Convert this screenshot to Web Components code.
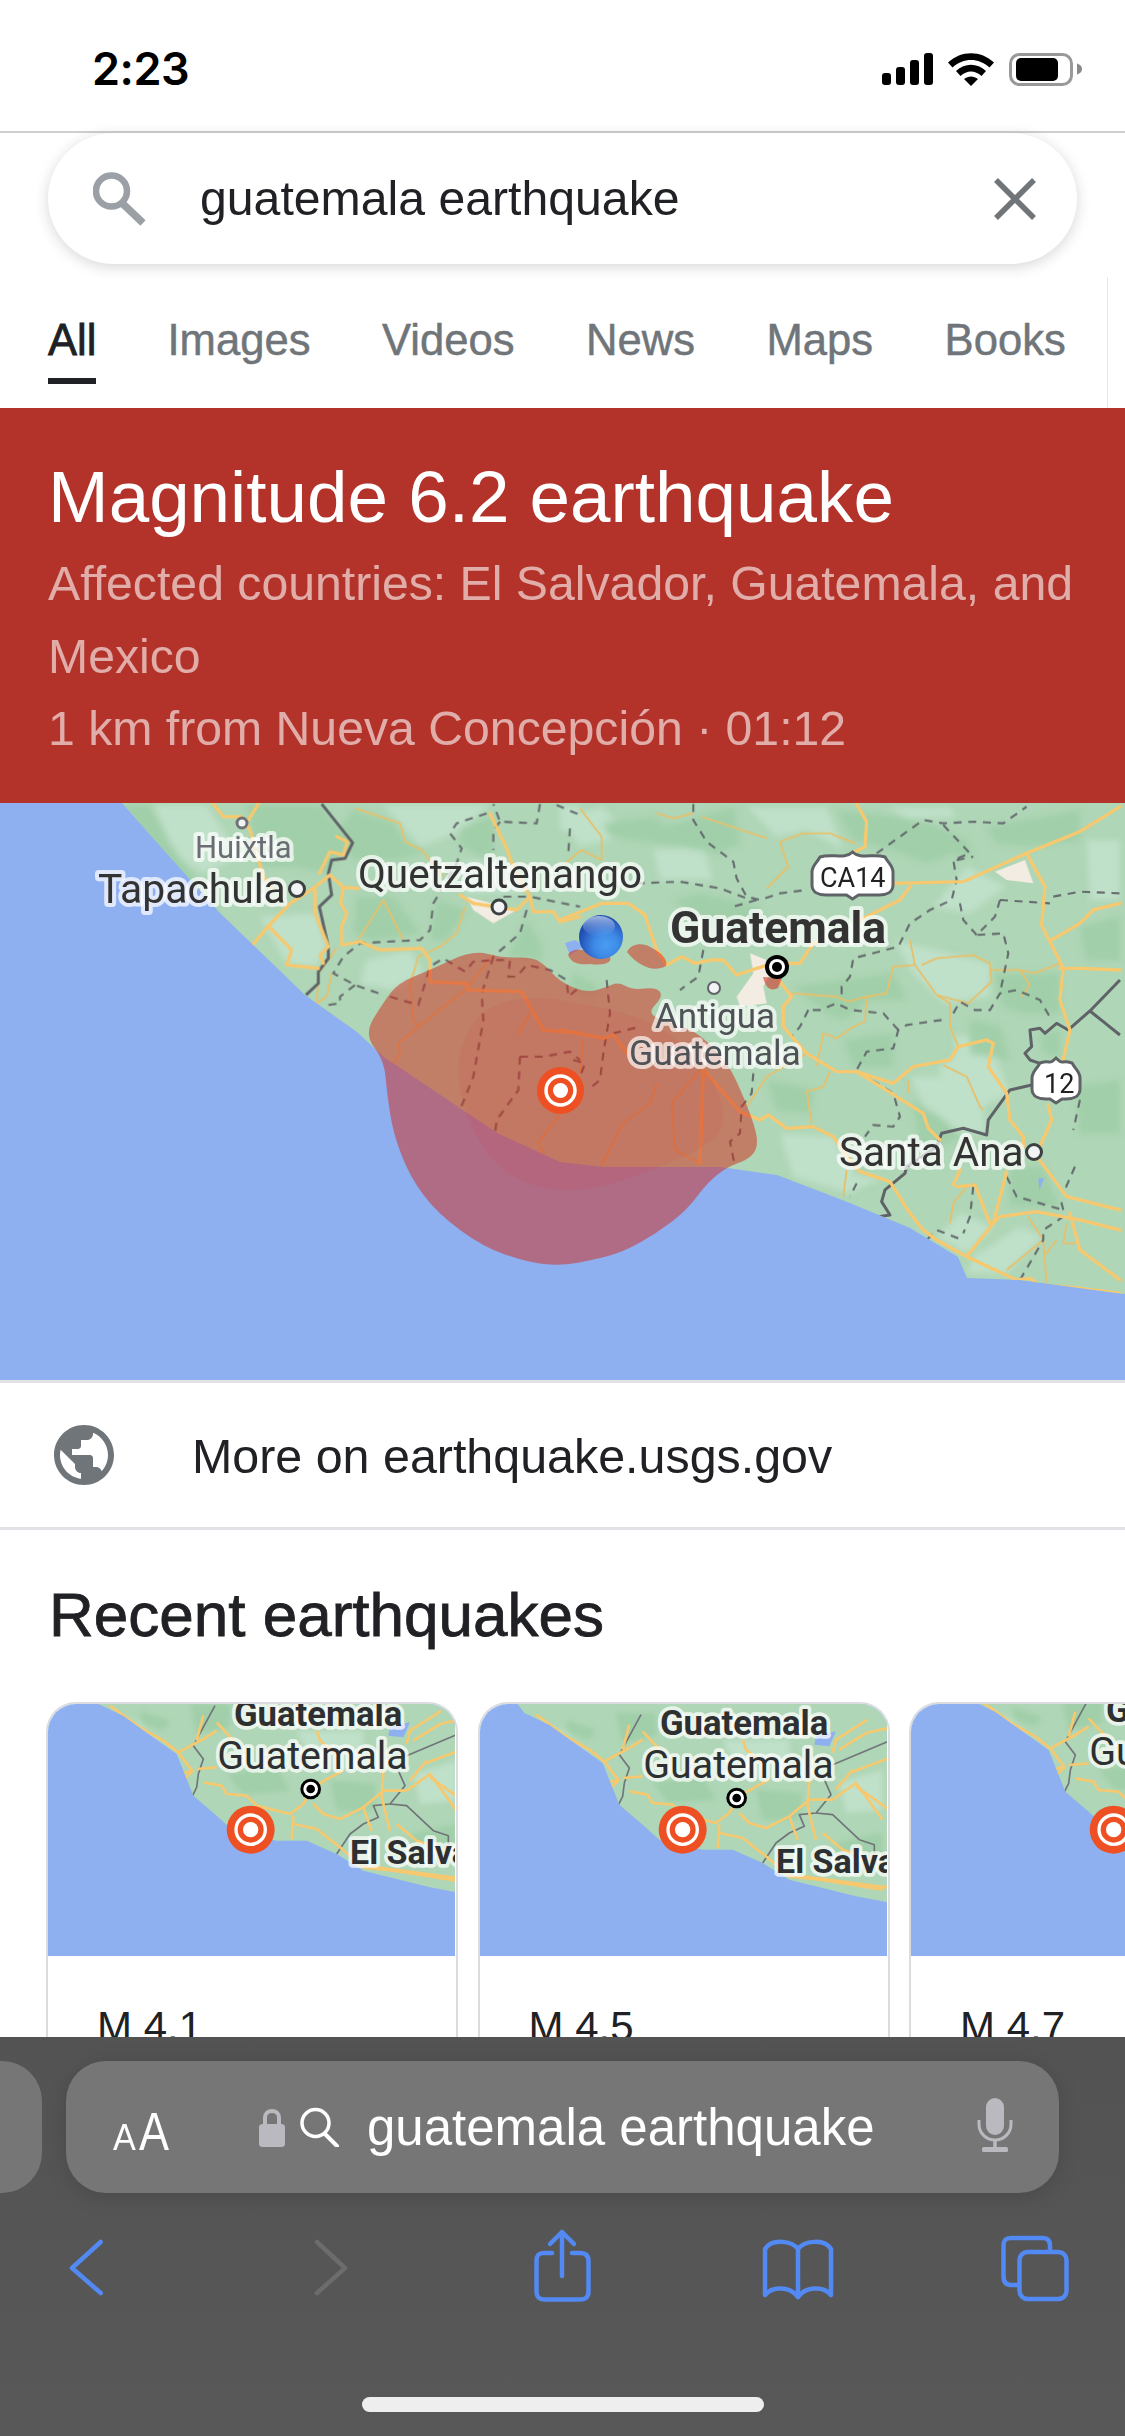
<!DOCTYPE html>
<html lang="en"><head><meta charset="utf-8"><title>guatemala earthquake</title>
<style>
html,body{margin:0;padding:0;background:#fff}
body{width:1125px;height:2436px;overflow:hidden;font-family:"Liberation Sans",Arial,sans-serif;display:flex;flex-direction:column}
main-column{flex:none}
</style></head><body>
<main-column>
  <status-bar></status-bar>
  <search-pill query="guatemala earthquake"></search-pill>
  <tab-strip></tab-strip>
  <quake-alert></quake-alert>
  <quake-map></quake-map>
  <more-link>More on earthquake.usgs.gov</more-link>
  <recent-quakes>
    <quake-card mag="M 4.1" dx="0" dy="0"></quake-card>
    <quake-card mag="M 4.5" dx="-18" dy="27"></quake-card>
    <quake-card mag="M 4.7" dx="27" dy="-12"></quake-card>
  </recent-quakes>
</main-column>
<safari-toolbar query="guatemala earthquake"></safari-toolbar>
<script>
const sans='"Liberation Sans",Arial,sans-serif';
function define(name,css,html,extra){
  customElements.define(name,class extends HTMLElement{
    connectedCallback(){
      if(this.shadowRoot)return;
      const r=this.attachShadow({mode:'open'});
      r.innerHTML='<style>'+css+'</style>'+(typeof html==='function'?html(this):html);
    }
  });
}
define('main-column',':host{display:block;width:1125px;height:2037px;overflow:hidden;position:relative}','<slot></slot>');

define('status-bar',`
:host{display:flex;box-sizing:border-box;width:1125px;height:133px;border-bottom:2px solid #cfcfcf;background:#fff;justify-content:space-between;align-items:flex-start}
.t{font:600 45px/1 Inter,"Liberation Sans",sans-serif;color:#000;margin:46px 0 0 92px;letter-spacing:-.5px}
svg{display:block;margin:53px 40px 0 0}
`,`<div class="t">2:23</div>
<svg width="203" height="33" viewBox="882 53 203 33">
<g fill="#000"><rect x="882" y="73" width="9" height="12" rx="3"/><rect x="896" y="67" width="9" height="18" rx="3"/><rect x="910" y="60" width="9" height="25" rx="3"/><rect x="924" y="53" width="9" height="32" rx="3"/>
<path d="M948 62.5C961 50 981 50 994 62.5L989.5 67.5C979 57.500 963 57.500 952.500 67.500Z"/>
<path d="M956 71C965 62.5 977 62.500 986 71L981.500 76C975 70 967 70 960.500 76Z"/>
<path d="M964 79C968.500 75.500 973.500 75.500 978 79L971 86Z"/></g>
<rect x="1010.500" y="54.500" width="61" height="30" rx="9" fill="none" stroke="#999" stroke-width="3"/>
<rect x="1016" y="58" width="42" height="23" rx="5" fill="#000"/>
<path d="M1077 63.500C1081 65 1082 67 1082 69C1082 71 1081 73 1077 74.500Z" fill="#8a8a8a"/></svg>`);

define('search-pill',`
:host{display:block;height:131px;background:#fff;position:relative;z-index:2}
.p{margin:0 48px;height:131px;border-radius:66px;background:#fff;box-shadow:0 3px 14px rgba(32,33,36,.18);display:flex;align-items:center;padding-left:45px;box-sizing:border-box;font:48.200px/1 ${sans};color:#202124}
.s{margin-right:47px;display:block}
.q{flex:1;position:relative}
.x{margin-right:40px;display:block}
`,h=>`<div class="p"><svg class="s" width="60" height="56" viewBox="93 170 60 56"><circle cx="111.500" cy="190" r="15.500" fill="none" stroke="#9aa0a6" stroke-width="6.500"/><path d="M122 202L143 222" stroke="#9aa0a6" stroke-width="7.500"/></svg><span class="q">${h.getAttribute('query')}</span><svg class="x" width="44" height="44" viewBox="0 0 44 44"><path d="M3 3L41 41M41 3L3 41" stroke="#70757a" stroke-width="5.500" fill="none"/></svg></div>`);

define('tab-strip',`
:host{display:flex;box-sizing:border-box;height:144px;background:#fff;padding:51px 0 0 48px;gap:71.500px;position:relative;font:43.600px/50px ${sans};color:#70757a;-webkit-text-stroke:.5px #70757a}
div{height:67px;flex:none}
.a{color:#202124;-webkit-text-stroke:.8px #202124;border-bottom:6px solid #202124;height:63px;width:48px}
.e{position:absolute;left:1107px;top:13px;bottom:0;width:1px;background:#e6e6e6;padding:0;height:auto}
`,`<div class="a">All</div><div>Images</div><div>Videos</div><div>News</div><div>Maps</div><div>Books</div><i class="e"></i>`);

define('quake-alert',`
:host{display:block;box-sizing:border-box;height:395px;background:#b3322a;padding:46px 30px 0 48px}
h2{margin:0 0 7px;font:400 72.800px/86px ${sans};color:#fff}
p{margin:0;font:400 48.200px/73px ${sans};color:rgba(255,255,255,.6)}
p+p{margin-top:-1px}
`,`<h2>Magnitude 6.2 earthquake</h2><p>Affected countries: El Salvador, Guatemala, and Mexico</p><p>1 km from Nueva Concepción · 01:12</p>`);

const pl=(a,attr)=>a.map(d=>`<polyline points="${d}" ${attr||''}/>`).join('');
const pg=(a,fill)=>a.map(d=>`<polygon points="${d}" fill="${fill}"/>`).join('');
/* closed smooth outline through the midpoints of a point list */
const smooth=s=>{const p=s.trim().split(/\s+/).map(q=>q.split(',').map(Number)),n=p.length;
 const mid=(a,b)=>[(a[0]+b[0])/2,(a[1]+b[1])/2];let m=mid(p[n-1],p[0]),d=`M${m[0]} ${m[1]}`;
 for(let i=0;i<n;i++){const e=mid(p[i],p[(i+1)%n]);d+=`Q${p[i][0]} ${p[i][1]} ${e[0]} ${e[1]}`;}return d+'Z';};
const M={
 lightA:["280,15 440,15 540,170 430,220 350,170","600,350 770,340 800,440 770,500 680,490","920,480 1050,450 1090,520 1000,570 900,550","970,15 1290,15 1190,100 1080,140 1020,70","1210,180 1340,190 1400,280 1210,280","1500,15 1560,15 1560,100 1500,90"],
 darkA:["560,15 780,15 870,130 800,220 700,200 600,200","880,30 1000,70 1040,130 1100,150 1010,180 880,180 830,100","890,290 1000,290 1080,400 940,420 880,400","1200,85 1300,50 1300,170 1260,170 1200,130","1400,360 1440,420 1450,480 1340,470 1370,420","1130,300 1220,330 1160,420 1110,420","190,15 270,15 330,130 470,320 430,330 260,130"],
 roadA:["460,12 490,50 545,50 570,90 610,230 640,270","595,12 565,60","580,432 625,378 690,310 760,265 810,225 850,262 895,265","625,378 695,450 680,495 775,505","830,110 862,125 850,165 810,155 778,220","765,270 765,340 805,440 780,465 790,490","850,262 842,310 860,340 845,380 845,435 900,425 960,450 1085,445 1110,480 1110,545 1220,550 1225,570 1385,575 1450,690 1560,700","1200,285 1240,310 1370,330 1410,290 1420,335 1480,335 1500,365 1560,350","1290,40 1340,145 1360,200 1410,290"],
 thinA:["885,25 1020,70 1035,125 1085,150 1150,230","970,300 895,420","970,300 1030,420","1215,320 1190,400 1140,440 1075,470 1050,555 1060,660 1075,680 1015,730 1020,760 1000,790","1075,680 1215,570 1300,465","815,520 800,590 770,610","830,445 775,520 770,610","1410,640 1370,705","1500,945 1435,1025 1450,1060"],
 dashA:["1440,12 1430,70 1320,65 1300,12","1280,40 1190,70 1170,100 1205,145 1190,190 1120,310 1110,390 1080,420 980,425 900,430 850,470 820,520 885,555 970,585","885,555 840,590 840,610 805,615","1320,65 1300,90 1300,150","1530,85 1525,160","1490,15 1560,45","990,590 1075,615 1110,500 1150,475 1215,515 1240,485 1300,480 1350,480 1345,530 1370,530 1400,495 1470,510 1520,540 1525,590 1560,560","1300,470 1265,580 1270,660 1240,830 1200,930","1380,770 1450,770 1530,755 1560,780","1380,770 1375,870 1310,960 1305,1000","1400,330 1380,400 1300,470","1330,290 1410,290 1560,320"],
 border:"785,12 878,128 855,175 815,180 805,220 815,285 778,320 805,440 805,475 775,515 775,550 738,585",
 lightB:["0,50 130,20 200,110 60,140","280,150 430,140 460,240 300,240","1000,420 1290,490 1290,590 1150,610 1060,520","1050,830 1250,830 1280,1000 1130,1000","660,1000 820,1010 890,1130 970,1130 870,1180 700,1130","560,20 800,20 850,150 740,90 650,110","980,20 1170,20 1190,50 1050,60","1180,700 1290,730 1350,880 1250,930 1130,810 1190,760","1200,1240 1300,1280 1220,1360 1130,1310","1380,1280 1450,1310 1340,1420 1220,1420 1240,1370","1580,120 1680,120 1680,300 1590,300","1220,200 1340,260 1230,340 1120,320"],
 darkB:["130,70 280,50 320,80 520,20 540,130 470,160 300,130 150,110","830,30 1080,60 1220,120 1240,170 1180,160 1100,190 1000,150 880,120","1280,80 1400,60 1560,30 1560,120 1400,140 1310,130","420,280 600,320 600,420 480,400 340,300","700,560 1000,520 1040,600 930,600 850,660 800,640","620,840 760,870 750,940 650,930","850,720 1000,700 1000,800 880,800","1060,900 1140,950 1210,1010 1080,1060","1300,520 1500,520 1500,640 1400,640 1330,620","1230,660 1320,680 1350,780 1230,760","1350,1100 1450,1100 1500,1220 1350,1220","1440,700 1500,690 1500,770 1450,760","1560,380 1680,350 1680,480 1580,480","1550,860 1680,840 1680,1000 1560,1000","40,520 120,560 90,590 30,560"],
 roadB:["890,12 920,65 915,140 885,155","1680,20 1560,95 1400,160 1210,245 1000,250","1050,260 1020,300 900,360","0,360 125,310 205,310 255,345 290,450 320,495 365,470 405,490 455,480 490,480 530,525 590,505 640,490 720,490 760,430 790,420","660,545 695,590 670,620 670,680 700,715 740,760 830,815 890,815 1000,850 1060,800 1170,780 1195,740 1280,720 1300,730 1285,800 1340,880 1350,960 1390,1010 1390,1040","890,815 1010,890 1090,940 1105,985 1140,1020","540,935 600,960 625,945 680,985 760,980 820,1010 870,1080 900,1115 990,1145 1050,1240 1090,1290 1130,1320 1220,1370 1300,1270 1320,1250 1430,1235 1560,1260 1680,1290","1220,1370 1370,1440 1410,1435 1440,1455 1560,1465 1680,1480","1400,160 1455,260 1445,375 1510,505 1500,600 1530,690 1510,780","1475,420 1560,370 1600,330 1680,310","1500,505 1560,505 1680,510","1420,1055 1520,1190 1560,1200 1680,1230","1465,915 1475,960 1440,1040","1340,1115 1300,1270","1180,1155 1200,1110","1190,1160 1245,1155 1290,1270","0,690 130,715 160,705 210,770","430,810 420,1090","430,810 540,935","1530,1240 1560,1350 1680,1440"],
 thinB:["660,125 730,100 810,100 885,130","660,125 685,200 620,265","290,40 340,55 400,40","425,50 620,115","60,25 125,110 125,180 65,150 15,190","1000,500 980,580 920,590 915,665 880,680 830,715 790,700","695,580 830,590 865,605 920,590","1000,500 1065,495 1130,585 1225,610 1295,545 1290,490 1240,465 1130,475 1085,495","1050,420 1065,495","1290,510 1380,510 1410,555 1385,590","1380,510 1425,520 1500,490","1130,585 1170,610 1170,680 1195,740","790,700 770,800","810,815 790,860 740,875 755,970","560,920 620,830 740,760","1150,795 1220,830 1260,920 1270,930","1045,840 1045,880","860,1110 850,1190","1180,1210 1220,1160","1180,1210 1170,1270","1405,1250 1450,1320 1340,1410","1450,1320 1460,1450","1520,1270 1510,1330 1560,1330","1490,1320 1455,1365","60,820 70,720","290,850 270,910 190,970 125,1095","335,910 420,810","335,910 345,1050 420,1090"],
 dashB:["400,12 400,60 440,125 520,185 530,235 560,290 600,300 660,280 740,270","590,300 520,320","230,250 360,245 480,265 560,295","950,160 1090,60 1150,70 1240,65 1330,70 1400,20","1150,75 1230,160 1180,180 1190,240 1175,300 1110,330 1050,370 1015,440 880,475 870,530 845,560 845,600","1320,300 1305,350 1250,405 1330,400 1345,460 1320,580","1190,180 1240,170","1200,310 1210,360 1250,405","1480,290 1560,275 1680,280","1320,300 1470,310","1145,660 1040,675 1015,690 1000,745 920,755 890,810","1015,690 970,640 870,630 830,610 780,630 745,630","745,630 720,680 695,710","1180,640 1200,605 1245,630 1290,630 1320,580 1370,570 1440,600 1475,660","900,820 1000,880 1020,950 1000,980 940,975 915,1010","430,450 415,530 360,570","580,820 575,880 545,920 540,1000 510,1025 525,1100","890,1150 870,1190","1100,1320 1130,1290 1195,1315","1240,1160 1230,1250 1210,1300","1340,1130 1370,1190 1510,1230","1510,1230 1500,1190","1380,1440 1450,1320 1450,1290 1510,1250","1545,1100 1510,1180","1560,900 1540,990","140,540 150,640 130,760 120,840 90,865","40,780 75,790 60,830","160,700 240,680"],
 borderB:["1680,540 1590,633 1525,690 1490,670 1455,700 1440,685 1410,690 1415,740 1395,760 1410,780 1440,790","1590,633 1680,705","1415,855 1350,870 1285,960 1280,1005 1210,985 1145,1000 1130,1040 1040,1100 1035,1120 975,1170 965,1205 990,1245 955,1250"]
};
const land="122,803 220,913 305,995 357,1032 385,1058 393,1063 497,1133 560,1162 603,1167 720,1167 777,1175 850,1203 910,1228 958,1257 967,1278 1020,1280 1080,1288 1125,1294 1125,803";
const redA="364,1034 383,1003 398,983 430,970 473,950 503,958 530,957 543,963 560,982 587,993 607,987 618,982 633,990 657,987 663,997 648,1012 660,1020 680,1025 700,1035 715,1050 730,1067 745,1100 757,1133 757,1150 747,1160 727,1167 707,1183 687,1210 657,1233 623,1252 593,1260 560,1266 527,1262 483,1247 437,1213 410,1177 393,1133 387,1093 384,1060";
const redIn="478,1010 530,995 590,1005 650,1020 690,1050 720,1090 725,1130 700,1150 640,1175 600,1187 560,1192 520,1182 490,1160 465,1115 455,1060";
customElements.define('quake-map',class extends HTMLElement{connectedCallback(){
 if(this.shadowRoot)return;const r=this.attachShadow({mode:'open'});
 const lab=(x,y,s,t,c,w,o)=>`<text x="${x}" y="${y}" font-size="${s}" fill="${c||'#333'}" font-weight="${w||400}" stroke="${o||'rgba(255,255,255,.72)'}" stroke-width="8" paint-order="stroke" stroke-linejoin="round">${t}</text>`;
 const dot=(x,y,r2,c,sw)=>`<circle cx="${x}" cy="${y}" r="${r2}" fill="#f1f3f4" stroke="${c||'#3c4043'}" stroke-width="${sw||3}"/>`;
 const shield=(x,y,w,h)=>{const m=x+w/2,b=y+h;return `<path d="M${x+8} ${y+5}C${x+20} ${y+1} ${m-8} ${y+8} ${m} ${y}C${m+8} ${y+8} ${x+w-20} ${y+1} ${x+w-8} ${y+5}C${x+w-4} ${y+12} ${x+w} ${y+14} ${x+w} ${y+20}L${x+w} ${b-16}C${x+w} ${b-8} ${x+w-8} ${b-6} ${x+w-14} ${b-6}L${m+6} ${b-6}L${m} ${b-2}L${m-6} ${b-6}L${x+14} ${b-6}C${x+8} ${b-6} ${x} ${b-8} ${x} ${b-16}L${x} ${y+20}C${x} ${y+14} ${x+4} ${y+12} ${x+8} ${y+5}Z" fill="#fff" stroke="#5f6368" stroke-width="3"/>`};
 r.innerHTML=`<style>:host{display:block;width:1125px;height:577px;background:#8fb0f0}svg{display:block;font-family:Roboto,"Liberation Sans",sans-serif}
 .road{fill:none;stroke:#f6c86f;stroke-width:10;stroke-linejoin:round;stroke-linecap:round}
 .thin{fill:none;stroke:#e7c06c;stroke-width:5.500;stroke-linejoin:round}
 .dash{fill:none;stroke:#5f6368;stroke-width:6.500;stroke-dasharray:24 20;opacity:.9}
 .bord{fill:none;stroke:#5f6368;stroke-width:9;stroke-linejoin:round}</style>
 <svg width="1125" height="577" viewBox="0 803 1125 577"><defs>
 <clipPath id="l"><polygon points="${land}"/></clipPath>
 <filter id="soft" x="-5%" y="-5%" width="110%" height="110%"><feGaussianBlur stdDeviation="3"/></filter>
 <radialGradient id="b" cx=".62" cy=".68" r=".62"><stop offset="0" stop-color="#4a9cf2"/><stop offset=".45" stop-color="#3d8ae6"/><stop offset=".8" stop-color="#2d63c8"/><stop offset="1" stop-color="#1f4fb0"/></radialGradient>
 <linearGradient id="h" x1="0" y1="0" x2="0" y2="1"><stop offset="0" stop-color="#b9c8ea" stop-opacity=".85"/><stop offset="1" stop-color="#6f9be0" stop-opacity=".1"/></linearGradient>
 </defs>
 <rect x="0" y="803" width="1125" height="577" fill="#8fb0f0"/>
 <polygon points="${land}" fill="#afd6b6"/>
 <g clip-path="url(#l)">
  <g filter="url(#soft)">
  <g transform="translate(60 800) scale(.3333)">${pg(M.lightA,'#bfe0c9')}${pg(M.darkA,'#a0cfa9')}</g>
  <g transform="translate(560 800) scale(.3333)">${pg(M.lightB,'#bfe0c9')}${pg(M.darkB,'#a0cfa9')}</g>
  </g>
  <g transform="translate(560 800) scale(.3333)"><polygon points="570,460 620,480 640,500 610,560 620,610 540,620 530,590 580,520" fill="#f3ece2"/><polygon points="1305,215 1395,180 1420,250 1340,240" fill="#f3ece2"/></g>
  <g transform="translate(60 800) scale(.3333)"><polygon points="1220,290 1370,330 1300,370 1240,330" fill="#f3ece2"/>${pl(M.thinA,'class="thin"')}${pl(M.dashA,'class="dash"')}${pl([M.border],'class="bord"')}${pl(M.roadA,'class="road"')}</g>
  <g transform="translate(560 800) scale(.3333)">${pl(M.thinB,'class="thin"')}${pl(M.dashB,'class="dash"')}${pl(M.borderB,'class="bord"')}${pl(M.roadB,'class="road"')}
   <polygon points="1435,1135 1452,1135 1438,1172" fill="#8fb0f0"/></g>
 </g>
 <path d="${smooth(redA)}" fill="rgb(211,40,26)" opacity=".5"/>
 <path d="${smooth(redIn)}" fill="rgb(211,40,26)" opacity=".07"/>
 <polygon points="565,943 575,940 585,946 570,955" fill="#8fb0f0"/>
 <path d="M568 955C572 946 588 950 610 957C612 962 606 966 590 964C580 965 572 964 568 955Z" fill="rgb(211,40,26)" opacity=".5"/>
 <path d="M627 952C632 942 645 943 652 948C662 953 668 960 666 966C655 972 640 968 627 952Z" fill="rgb(211,40,26)" opacity=".5"/>
 <path d="M763 977L782 978L778 988C772 991 766 990 763 977Z" fill="rgb(211,40,26)" opacity=".55"/>
 ${lab(195,858,31,'Huixtla','#6a6e74')}
 ${lab(98,903,40.800,'Tapachula')}
 ${lab(358,888,40.500,'Quetzaltenango')}
 ${lab(670,943,44.500,'Guatemala','#333',700)}
 ${lab(655,1028,35,'Antigua','#4f5357',400,'rgba(255,255,255,.68)')}
 ${lab(629,1065,35.500,'Guatemala','#4f5357',400,'rgba(255,255,255,.68)')}
 ${lab(839,1166,40.500,'Santa Ana')}
 ${dot(242,823,5,'#6f7378',3)}${dot(297,889,7.500)}${dot(499,907,7)}${dot(714,988,6,'#5f6368',2)}${dot(1034,1152,7.500)}
 <circle cx="777" cy="967" r="12" fill="#000"/><circle cx="777" cy="967" r="8" fill="#fff"/><circle cx="777" cy="967" r="5" fill="#000"/>
 ${shield(812,852,81,49)}<text x="820" y="887" font-size="27" fill="#222">CA14</text>
 ${shield(1032,1058,48,47)}<text x="1044" y="1093" font-size="27" fill="#222">12</text>
 <circle cx="601" cy="937" r="22" fill="url(#b)"/><ellipse cx="599" cy="926" rx="16" ry="10" fill="url(#h)"/>
 <circle cx="560.500" cy="1090.500" r="23.500" fill="#ee5023"/><circle cx="560.500" cy="1090.500" r="14.500" fill="none" stroke="#fff" stroke-width="3.500"/><circle cx="560.500" cy="1090.500" r="7.500" fill="#fff"/>
 </svg>`;
}});

define('more-link',`
:host{display:flex;box-sizing:border-box;width:1125px;height:150px;align-items:center;padding:0 0 0 48px;border-top:3px solid #e2e2e6;border-bottom:3px solid #e2e2e6;background:#fff;font:48.400px/1 ${sans};color:#202124}
svg{display:block;margin-right:72px;flex:none}
span{position:relative;top:1px}
`,`<svg width="72" height="72" viewBox="0 0 24 24"><path fill="#70757a" d="M12 2C6.480 2 2 6.480 2 12s4.480 10 10 10 10-4.480 10-10S17.520 2 12 2zm-1 17.930c-3.950-.490-7-3.850-7-7.930 0-.620.080-1.210.210-1.790L9 15v1c0 1.100.900 2 2 2v1.930zm6.900-2.540c-.260-.810-1-1.390-1.900-1.390h-1v-3c0-.550-.450-1-1-1H8v-2h2c.550 0 1-.450 1-1V7h2c1.100 0 2-.900 2-2v-.410c2.930 1.190 5 4.060 5 7.410 0 2.080-.800 3.970-2.100 5.390z"/></svg><span><slot></slot></span>`);

define('recent-quakes',`
:host{display:block;background:#fff;padding:0}
h3{margin:0;padding:50px 0 0 49px;font:400 62px/70px ${sans};color:#202124;-webkit-text-stroke:.8px #202124;height:122px}
.r{display:flex;gap:19.500px;padding-left:46px;width:1400px}
`,`<h3>Recent earthquakes</h3><div class="r"><slot></slot></div>`);

const mini={
 land:"100,-100 205,40 280,75 440,190 490,315 560,375 610,420 740,450 830,450 920,490 1000,540 1100,565 1200,590 1280,605 1500,650 1500,-100",
 road:["240,45 330,110 400,150 445,185 490,245","445,185 520,145 560,120","520,75 500,150","560,95 620,160","405,235 430,255 490,240","445,280 490,240","500,235 560,230","520,275 575,285 590,310 650,315 680,345 780,370 820,340 850,290","850,290 900,260 940,240","850,340 880,370 930,385 1000,350 1025,420","790,375 785,445","790,400 860,415 930,470 1000,530 1090,540 1280,570","1000,350 1060,300 1130,300","1060,240 1055,320 1080,420","1130,300 1200,250 1280,360","1190,210 1140,270","1150,150 1230,100 1500,40","1130,160 1140,120 1235,60","860,120 870,150 930,200","1180,220 1500,100","1100,400 1160,450 1500,560","1040,530 1500,590","1200,260 1400,400","20,40 60,100"],
 gray:["555,45 490,165 520,205 505,250 500,290 485,320","1130,195 1500,40","1105,240 1125,285 1080,340 1030,345 1045,380 1000,400 960,430 920,490","1080,340 1130,345 1210,420 1255,435 1255,460"],
 dark:["330,60 420,90 400,120 340,100","480,40 600,40 600,110 500,130","590,250 740,230 780,300 640,310","900,270 1040,280 1030,360 920,360","1140,430 1280,400 1280,520 1180,500"],
 light:["240,60 330,100 400,170 450,280 490,315 400,220","800,120 1000,120 1000,240 850,230","1150,250 1280,210 1280,330 1170,340"]
};
customElements.define('quake-card',class extends HTMLElement{connectedCallback(){
 if(this.shadowRoot)return;const r=this.attachShadow({mode:'open'});
 const dx=this.getAttribute('dx'),dy=this.getAttribute('dy');
 const lab=(x,y,s,t,w)=>`<text x="${x}" y="${y}" font-size="${s}" font-weight="${w}" fill="#2d2f31" stroke="rgba(255,255,255,.72)" stroke-width="22" paint-order="stroke" stroke-linejoin="round">${t}</text>`;
 r.innerHTML=`<style>:host{display:block;flex:none;box-sizing:border-box;width:412px;height:420px;border:2.500px solid #dadce0;border-radius:30px 30px 0 0;overflow:hidden;background:#fff}
 svg{display:block;font-family:Roboto,"Liberation Sans",sans-serif}
 p{margin:0;padding:48px 0 0 49px;font:42px/46px ${sans};color:#202124}
 .road{fill:none;stroke:#f6c86f;stroke-width:8;stroke-linejoin:round}.gray{fill:none;stroke:#70757a;stroke-width:5;stroke-linejoin:round}</style>
 <svg width="407" height="252" viewBox="54 40 1221 756"><defs><clipPath id="c"><polygon points="${mini.land}"/></clipPath><filter id="soft" x="-5%" y="-5%" width="110%" height="110%"><feGaussianBlur stdDeviation="8"/></filter></defs>
 <rect x="54" y="40" width="1221" height="756" fill="#8fb0f0"/>
 <g transform="translate(${dx} ${dy})"><polygon points="${mini.land}" fill="#afd6b6"/>
 <g clip-path="url(#c)"><g filter="url(#soft)">${pg(mini.light,'#bfe0c9')}${pg(mini.dark,'#a0cfa9')}</g>${pl(mini.gray,'class="gray"')}${pl(mini.road,'class="road"')}
 <polygon points="1080,110 1140,95 1120,140 1075,135" fill="#8fb0f0"/></g>
 ${lab(612,105,104,'Guatemala',700)}${lab(562,235,118,'Guatemala',400)}${lab(960,520,102,'El Salvador',700)}
 <circle cx="842" cy="295" r="31" fill="#000"/><circle cx="842" cy="295" r="22" fill="#fff"/><circle cx="842" cy="295" r="13" fill="#000"/></g>
 <circle cx="662" cy="417" r="72" fill="#ee5023"/><circle cx="662" cy="417" r="44" fill="none" stroke="#fff" stroke-width="10"/><circle cx="662" cy="417" r="23" fill="#fff"/>
 </svg><p>${this.getAttribute('mag')}</p>`;
}});

define('safari-toolbar',`
:host{display:block;flex:none;width:1125px;height:399px;background:linear-gradient(#535353,#585858);position:relative;z-index:3;overflow:hidden}
.a{display:flex;gap:24px;margin:24px 0 0 -60px;height:132px}
.prev{width:102px;border-radius:40px;background:#757675;flex:none}
.pill{width:993px;border-radius:40px;background:#757675;box-shadow:0 4px 22px rgba(0,0,0,.14);display:flex;align-items:center;color:#fff;position:relative;flex:none}
.aa{display:flex;align-items:baseline;margin-left:47px;width:146px;font-weight:400;line-height:1;position:relative;top:4px}
.aa b{font-weight:400;font-size:36px;transform:scaleX(.95);transform-origin:left;width:26px;display:block}
.aa i{font-style:normal;font-size:53px;transform:scaleX(.85);transform-origin:left;display:block}
.q{font:51px/1 ${sans};margin-left:27px;position:relative;top:0;white-space:nowrap}
.mic{position:absolute;right:46px;top:37px;display:block}
.lk{display:block;flex:none}
.i{display:grid;grid-template-columns:repeat(5,237px);margin:32px 0 0 -32px;height:90px}
.i svg{display:block}
.h{width:402px;height:15px;border-radius:8px;background:#eee;margin:82px 0 0 362px}
`,h=>{
 const blue='#5389f2';
 const cell=(l,c)=>`<svg width="237" height="90" viewBox="${l} 2225 237 90" fill="none" stroke="${blue}" stroke-width="4.500" stroke-linecap="round" stroke-linejoin="round">${c}</svg>`;
 return `<div class="a"><div class="prev"></div><div class="pill">
 <div class="aa"><b>A</b><i>A</i></div>
 <svg class="lk" width="26" height="39" viewBox="0 0 26 39"><path d="M6 18V9.500C6 5.500 9 3 13 3S20 5.500 20 9.500V18" fill="none" stroke="#b9b9bf" stroke-width="4"/><rect x="0" y="16" width="26" height="23" rx="3.500" fill="#b9b9bf"/></svg>
 <svg style="margin-left:15px;display:block;flex:none" width="40" height="40" viewBox="0 0 40 40"><circle cx="15.500" cy="16" r="13.500" fill="none" stroke="#fff" stroke-width="3.500"/><path d="M25 27L37 39" stroke="#fff" stroke-width="4" stroke-linecap="round"/></svg>
 <span class="q">${h.getAttribute('query')}</span>
 <svg class="mic" width="36" height="54" viewBox="0 0 36 54"><rect x="9" y="0" width="18" height="37" rx="9" fill="#b9b9bf"/><path d="M2 22V26C2 35 9 42 18 42S34 35 34 26V22" fill="none" stroke="#b9b9bf" stroke-width="3"/><path d="M18 42V51" stroke="#b9b9bf" stroke-width="3.500"/><rect x="5" y="49" width="26" height="5" rx="1.500" fill="#b9b9bf"/></svg>
 </div></div>
 <div class="i">
 ${cell(-32,'<path d="M100.700 2242L72 2268L100.700 2293"/>')}
 ${cell(205,'<path d="M317 2242L345 2268L317 2293" stroke="#6c6c6c"/>')}
 ${cell(442,'<path d="M552 2253H544C538 2253 536.500 2256 536.500 2261V2291C536.500 2297 539 2299.500 545 2299.500H580C586 2299.500 588.500 2297 588.500 2291V2261C588.500 2256 586 2253 580 2253H572"/><path d="M562 2276V2232M550 2244L562 2232L574 2244"/>')}
 ${cell(679,'<path d="M798 2249C792 2241 772 2238 765 2249V2295C772 2286 790 2286 798 2297C806 2286 824 2286 831 2295V2249C824 2238 804 2241 798 2249Z"/><path d="M798 2249V2297"/>')}
 ${cell(916,'<path d="M1050 2250V2246C1050 2240 1047 2238 1043 2238H1011C1006 2238 1003.500 2240 1003.500 2246V2276C1003.500 2282 1006 2285 1011 2285H1018"/><rect x="1019.500" y="2252" width="47" height="47" rx="8"/>')}
 </div><div class="h"></div>`;
});
</script>
</body></html>
